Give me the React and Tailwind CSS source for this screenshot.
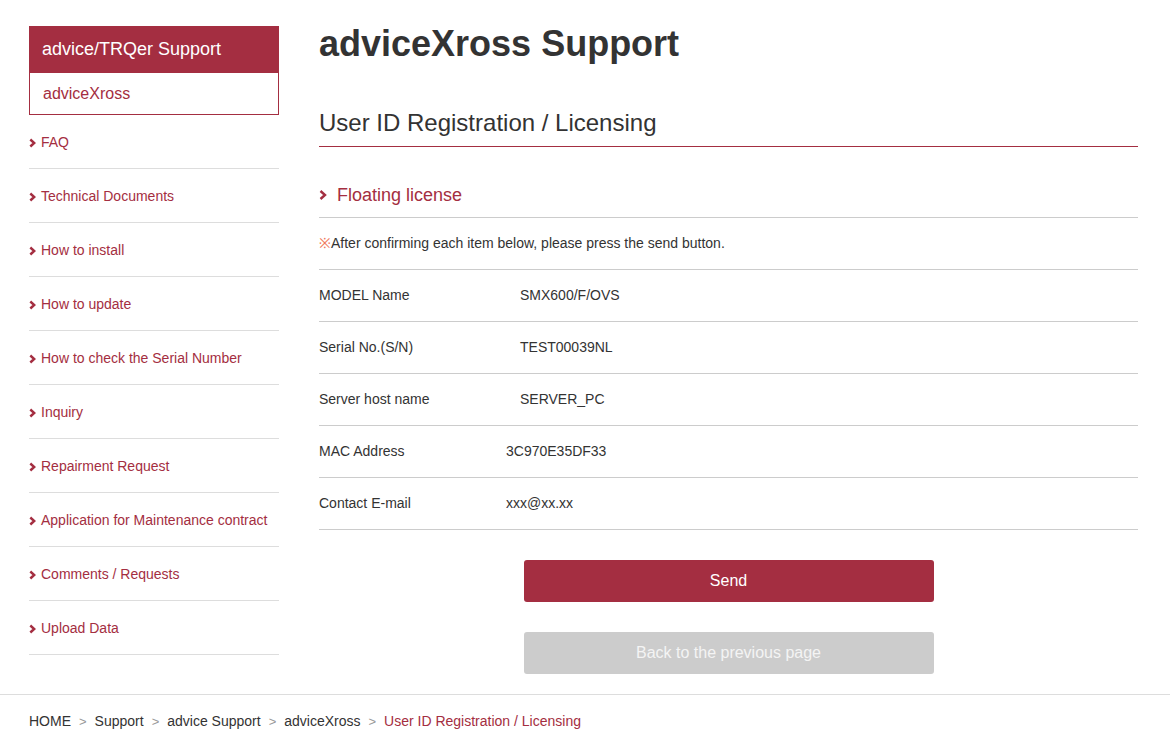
const RED = 'text-[#a42e41]';

function Chevron({ className = '', width = 2.6 }) {
  return (
    <svg viewBox="0 0 8 10" className={className} fill="none">
      <polyline points="1.5,1 6,5 1.5,9" stroke="#a42e41" strokeWidth={width} />
    </svg>
  );
}

const navItems = [
  'FAQ',
  'Technical Documents',
  'How to install',
  'How to update',
  'How to check the Serial Number',
  'Inquiry',
  'Repairment Request',
  'Application for Maintenance contract',
  'Comments / Requests',
  'Upload Data',
];

const rows = [
  ['MODEL Name', 'SMX600/F/OVS', 'pl-[201px]'],
  ['Serial No.(S/N)', 'TEST00039NL', 'pl-[201px]'],
  ['Server host name', 'SERVER_PC', 'pl-[201px]'],
  ['MAC Address', '3C970E35DF33', 'pl-[187px]'],
  ['Contact E-mail', 'xxx@xx.xx', 'pl-[187px]'],
];

const crumbs = ['HOME', 'Support', 'advice Support', 'adviceXross'];

export default function App() {
  return (
    <div className="min-h-screen bg-white font-['Liberation_Sans',Arial,sans-serif] text-[#333]">
      <div className="flex gap-[40px] px-[29px] pt-[26px]">
        {/* Sidebar */}
        <aside className="w-[250px] shrink-0">
          <div className="h-[47px] bg-[#a42e41] px-[13px] flex items-center text-white text-[18px]">
            advice/TRQer Support
          </div>
          <div className={`h-[42px] border border-t-0 border-[#a42e41] px-[13px] flex items-center text-[16px] ${RED}`}>
            adviceXross
          </div>
          <ul>
            {navItems.map((item) => (
              <li
                key={item}
                className={`h-[54px] pt-[2px] border-b border-[#ddd] flex items-center gap-[5px] text-[14px] ${RED}`}
              >
                <Chevron className="w-[7px] h-[10px] mt-[1px]" width={2.8} />
                <span>{item}</span>
              </li>
            ))}
          </ul>
        </aside>

        {/* Main */}
        <main className="w-[819px]">
          <h1 className="text-[36px] leading-[36px] font-bold text-[#333]">adviceXross Support</h1>
          <h2 className="mt-[49px] pb-[11px] text-[24px] leading-[24px] border-b border-[#a42e41]">
            User ID Registration / Licensing
          </h2>
          <h3 className={`mt-[39px] pb-[13px] text-[18px] leading-[18px] border-b border-[#ccc] flex items-center gap-[10px] ${RED}`}>
            <Chevron className="w-[8px] h-[12px]" width={2.4} />
            <span>Floating license</span>
          </h3>
          <p className="h-[52px] border-b border-[#ccc] flex items-center text-[14px]">
            <span className="text-[#f0775c]">※</span>After confirming each item below, please press the send button.
          </p>
          {rows.map(([label, value, pad]) => (
            <div key={label} className="h-[52px] border-b border-[#ccc] flex items-center text-[14px]">
              <span className="w-0 whitespace-nowrap">{label}</span>
              <span className={pad}>{value}</span>
            </div>
          ))}
          <div className="flex flex-col items-center pt-[30px]">
            <button className="w-[410px] h-[42px] rounded-[3px] bg-[#a42e41] text-white text-[16px]">
              Send
            </button>
            <button className="mt-[30px] w-[410px] h-[42px] rounded-[3px] bg-[#ccc] text-[#f4f4f4] text-[16px]">
              Back to the previous page
            </button>
          </div>
        </main>
      </div>

      <footer className="mt-[20px] border-t border-[#ddd] px-[29px] pt-[16px] pb-[18px] text-[14px] flex items-center">
        {crumbs.map((c) => (
          <span key={c} className="flex items-center">
            <span>{c}</span>
            <span className="mx-[8px] text-[#999] text-[13px]">&gt;</span>
          </span>
        ))}
        <span className={RED}>User ID Registration / Licensing</span>
      </footer>
    </div>
  );
}
